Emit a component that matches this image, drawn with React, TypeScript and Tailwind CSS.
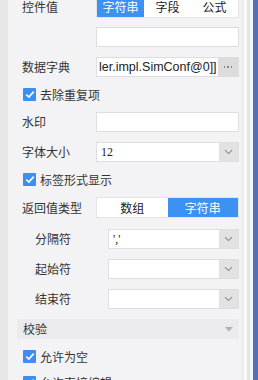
import type { ReactNode } from "react";

const font = { fontFamily: '"Noto Sans CJK SC", "Noto Sans", sans-serif' };

function Chevron() {
  return (
    <svg width="9" height="6" viewBox="0 0 9 6" aria-hidden>
      <path d="M1 1.2 L4.5 4.6 L8 1.2" fill="none" stroke="#8a8a8a" strokeWidth="1.1" />
    </svg>
  );
}

function Check() {
  return (
    <span className="flex h-[13px] w-[13px] shrink-0 items-center justify-center rounded-[1px] bg-[#3c8ff0]">
      <svg width="10" height="9" viewBox="0 0 10 9" aria-hidden>
        <path d="M1.3 4.6 L3.9 7.1 L8.7 1.6" fill="none" stroke="#fff" strokeWidth="1.7" />
      </svg>
    </span>
  );
}

function Row({ label, indent, h = "h-[30px]", children }: { label?: string; indent?: boolean; h?: string; children: ReactNode }) {
  return (
    <div className={`flex items-center ${h}`}>
      <div className={`shrink-0 text-[12px] text-[#333] ${indent ? "w-[86px] pl-[13px]" : "w-[74px]"}`}>{label}</div>
      <div className="min-w-0 flex-1">{children}</div>
    </div>
  );
}

function CheckRow({ label, h }: { label: string; h: string }) {
  return (
    <div className={`flex items-center gap-[4px] pl-[1px] text-[12px] text-[#333] ${h}`}>
      <Check />
      <span>{label}</span>
    </div>
  );
}

function Select({ value }: { value?: string }) {
  return (
    <div className="flex h-[20px] border border-[#dedede] bg-white">
      <div className="min-w-0 flex-1 pl-[4px] text-[12px] leading-[18px] text-[#222]" style={{ fontFamily: '"Liberation Serif", serif' }}>
        {value}
      </div>
      <div className="flex w-[19px] shrink-0 items-center justify-center bg-[#e2e2e2]">
        <Chevron />
      </div>
    </div>
  );
}

function Seg({ items, active }: { items: string[]; active: number }) {
  return (
    <div className="flex h-[21px] border border-[#e4e4e4] bg-white text-[12px]">
      {items.map((t, i) => (
        <div
          key={t}
          className={`flex flex-1 items-center justify-center ${i === active ? "bg-[#3d91f2] text-white" : "text-[#222]"}`}
        >
          {t}
        </div>
      ))}
    </div>
  );
}

export default function App() {
  return (
    <div className="flex h-[380px] w-[258px] overflow-hidden bg-[#e7e7e7]" style={font}>
      <div className="w-[8px] shrink-0 bg-[#e7e7e7]" />
      <div className="w-[233px] shrink-0 bg-[#f3f3f5] pl-[14px] pr-[2px]">
        <div className="mt-[-8px] flex flex-col">
          <Row label="控件值">
            <Seg items={["字符串", "字段", "公式"]} active={0} />
          </Row>
          <Row>
            <div className="h-[20px] border border-[#dedede] bg-white" />
          </Row>
          <Row label="数据字典">
            <div className="flex h-[20px] border border-[#dedede] bg-white">
              <div
                className="min-w-0 flex-1 overflow-hidden whitespace-nowrap pl-[2px] text-[12.5px] leading-[18px] text-[#222]"
                style={{ fontFamily: '"Liberation Sans", Arial, sans-serif' }}
              >
                ler.impl.SimConf@0]]
              </div>
              <div className="flex w-[20px] shrink-0 items-center justify-center gap-[2px] bg-[#dcdcdc]">
                <span className="h-[1.5px] w-[1.5px] bg-[#888]" />
                <span className="h-[1.5px] w-[1.5px] bg-[#888]" />
                <span className="h-[1.5px] w-[1.5px] bg-[#888]" />
              </div>
            </div>
          </Row>
          <CheckRow label="去除重复项" h="h-[25px]" />
          <Row label="水印">
            <div className="h-[20px] border border-[#dedede] bg-white" />
          </Row>
          <Row label="字体大小">
            <Select value="12" />
          </Row>
          <CheckRow label="标签形式显示" h="h-[25px]" />
          <Row label="返回值类型" h="h-[31px]">
            <Seg items={["数组", "字符串"]} active={1} />
          </Row>
          <Row label="分隔符" indent h="h-[31px]">
            <Select value="','" />
          </Row>
          <Row label="起始符" indent>
            <Select />
          </Row>
          <Row label="结束符" indent>
            <Select />
          </Row>
          <div className="flex h-[30px] items-center">
            <div className="ml-[-5px] flex h-[20px] flex-1 items-center justify-between bg-[#ebebed] pl-[6px] pr-[6px] text-[12px] text-[#333]">
              <span>校验</span>
              <svg width="8" height="5" viewBox="0 0 8 5" aria-hidden>
                <path d="M0 0 L8 0 L4 4.5 Z" fill="#b0b0b0" />
              </svg>
            </div>
          </div>
          <CheckRow label="允许为空" h="h-[25px]" />
          <CheckRow label="允许直接编辑" h="h-[27px]" />
        </div>
      </div>
      <div className="w-[3px] shrink-0 bg-[#eeeeee]" />
      <div className="w-[3px] shrink-0 bg-[#f8faf8]" />
      <div className="w-[3px] shrink-0 bg-[#e1e7e1]" />
      <div className="w-[3px] shrink-0 bg-[#f6f7f9]" />
      <div className="flex-1 bg-[#5670b6]" />
    </div>
  );
}
